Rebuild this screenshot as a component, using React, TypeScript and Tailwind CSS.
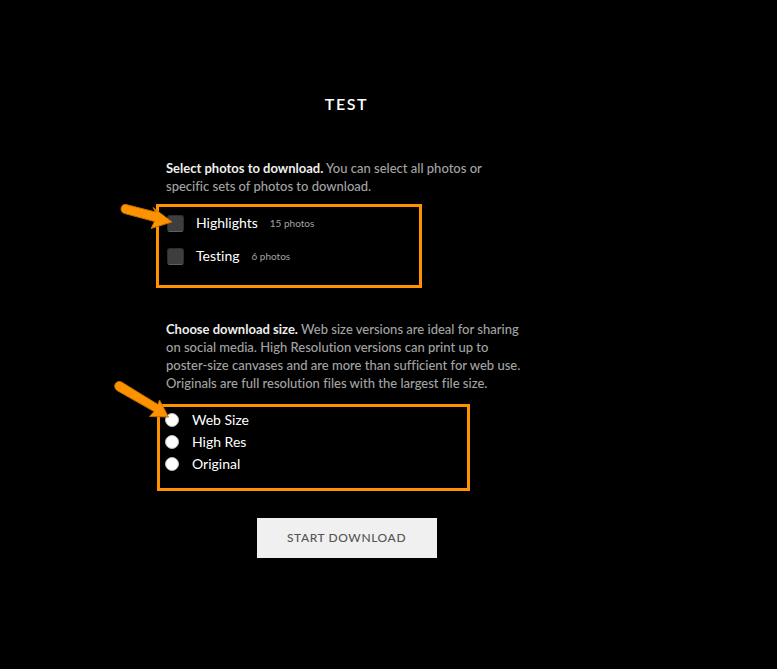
import { useState } from 'react';

interface PhotoSet {
  id: string;
  name: string;
  count: number;
}

const photoSets: PhotoSet[] = [
  { id: 'highlights', name: 'Highlights', count: 15 },
  { id: 'testing', name: 'Testing', count: 6 },
];

const sizes = ['Web Size', 'High Res', 'Original'];

function ShortArrow() {
  return (
    <svg
      className="pointer-events-none absolute -top-1 -left-10 h-8 w-14"
      viewBox="0 0 56 32"
      fill="#ff9200"
      stroke="#c46d00"
      strokeWidth="1"
      strokeLinejoin="round"
      aria-hidden="true"
    >
      <path d="M7 1.500 L36.500 9 L34 4.500 L53 19 L32 25.500 L35.500 18.500 L5.500 10.500 C0 9 1.500 0.500 7 1.500 Z" />
    </svg>
  );
}

function LongArrow() {
  return (
    <svg
      className="pointer-events-none absolute -top-7 -left-12 h-12 w-16"
      viewBox="0 0 64 48"
      fill="#ff9200"
      stroke="#c46d00"
      strokeWidth="1"
      strokeLinejoin="round"
      aria-hidden="true"
    >
      <path d="M9.500 3 L46 25.500 L47.500 21 L56.500 38 L37.500 37.500 L42 32.500 L5 11.500 C0 7.500 4 0.500 9.500 3 Z" />
    </svg>
  );
}

export default function App() {
  const [selected, setSelected] = useState<string[]>([]);
  const [size, setSize] = useState('');

  const toggle = (id: string) =>
    setSelected((prev) => (prev.includes(id) ? prev.filter((s) => s !== id) : [...prev, id]));

  return (
    <main className="min-h-screen bg-black pt-[95px] pr-[84px] pb-24 font-['Lato','Liberation_Sans',sans-serif] text-[#a3a3a3] [font-variant-ligatures:none]">
      <form className="mx-auto max-w-[361px]" onSubmit={(e) => e.preventDefault()}>
        <h1 className="text-center text-[16px] leading-[18px] font-semibold tracking-widest text-white">TEST</h1>

        <p className="mt-[46px] text-[13px] leading-[18px] font-medium">
          <strong className="font-bold text-[#eee]">Select photos to download.</strong> You can select all
          photos or specific sets of photos to download.
        </p>

        <fieldset
          aria-label="Photo sets"
          className="relative mt-[9px] -ml-[10px] flex max-w-[266px] flex-col gap-[15px] border-3 border-[#ff9200] px-2 pt-[7px] pb-5"
        >
          {photoSets.map((s) => (
            <label key={s.id} className="flex items-center text-[14px] leading-[18px] text-white">
              <input
                type="checkbox"
                checked={selected.includes(s.id)}
                onChange={() => toggle(s.id)}
                className="size-[17px] appearance-none rounded-[3px] border border-[#2c2e30] border-b-[#59616a] bg-[#3d3e40] checked:bg-[#ff9200]"
              />
              <span className="ml-3">{s.name}</span>
              <span className="ml-3 text-[10px] text-[#a3a3a3]">{s.count} photos</span>
            </label>
          ))}
          <ShortArrow />
        </fieldset>

        <p className="mt-8 text-[13px] leading-[18px] font-medium">
          <strong className="font-bold text-[#eee]">Choose download size.</strong> Web size versions are
          ideal for sharing on social media. High Resolution versions can print up to poster-size canvases
          and are more than sufficient for web use. Originals are full resolution files with the largest
          file size.
        </p>

        <fieldset
          aria-label="Download size"
          className="relative mt-3 -ml-[9px] max-w-[313px] border-3 border-[#ff9200] px-[5px] pt-[2px] pb-[13px]"
        >
          {sizes.map((name) => (
            <label key={name} className="flex items-center text-[14px] leading-[22px] text-white">
              <input
                type="radio"
                name="size"
                checked={size === name}
                onChange={() => setSize(name)}
                className="size-[14px] appearance-none rounded-full border border-[#bbb] bg-white checked:border-4 checked:border-[#ff9200]"
              />
              <span className="ml-[13px]">{name}</span>
            </label>
          ))}
          <LongArrow />
        </fieldset>

        <button
          type="submit"
          className="mx-auto mt-[27px] block h-10 w-[180px] bg-[#f0f0f0] text-[12px] font-medium tracking-wider text-[#555]"
        >
          START DOWNLOAD
        </button>
      </form>
    </main>
  );
}
